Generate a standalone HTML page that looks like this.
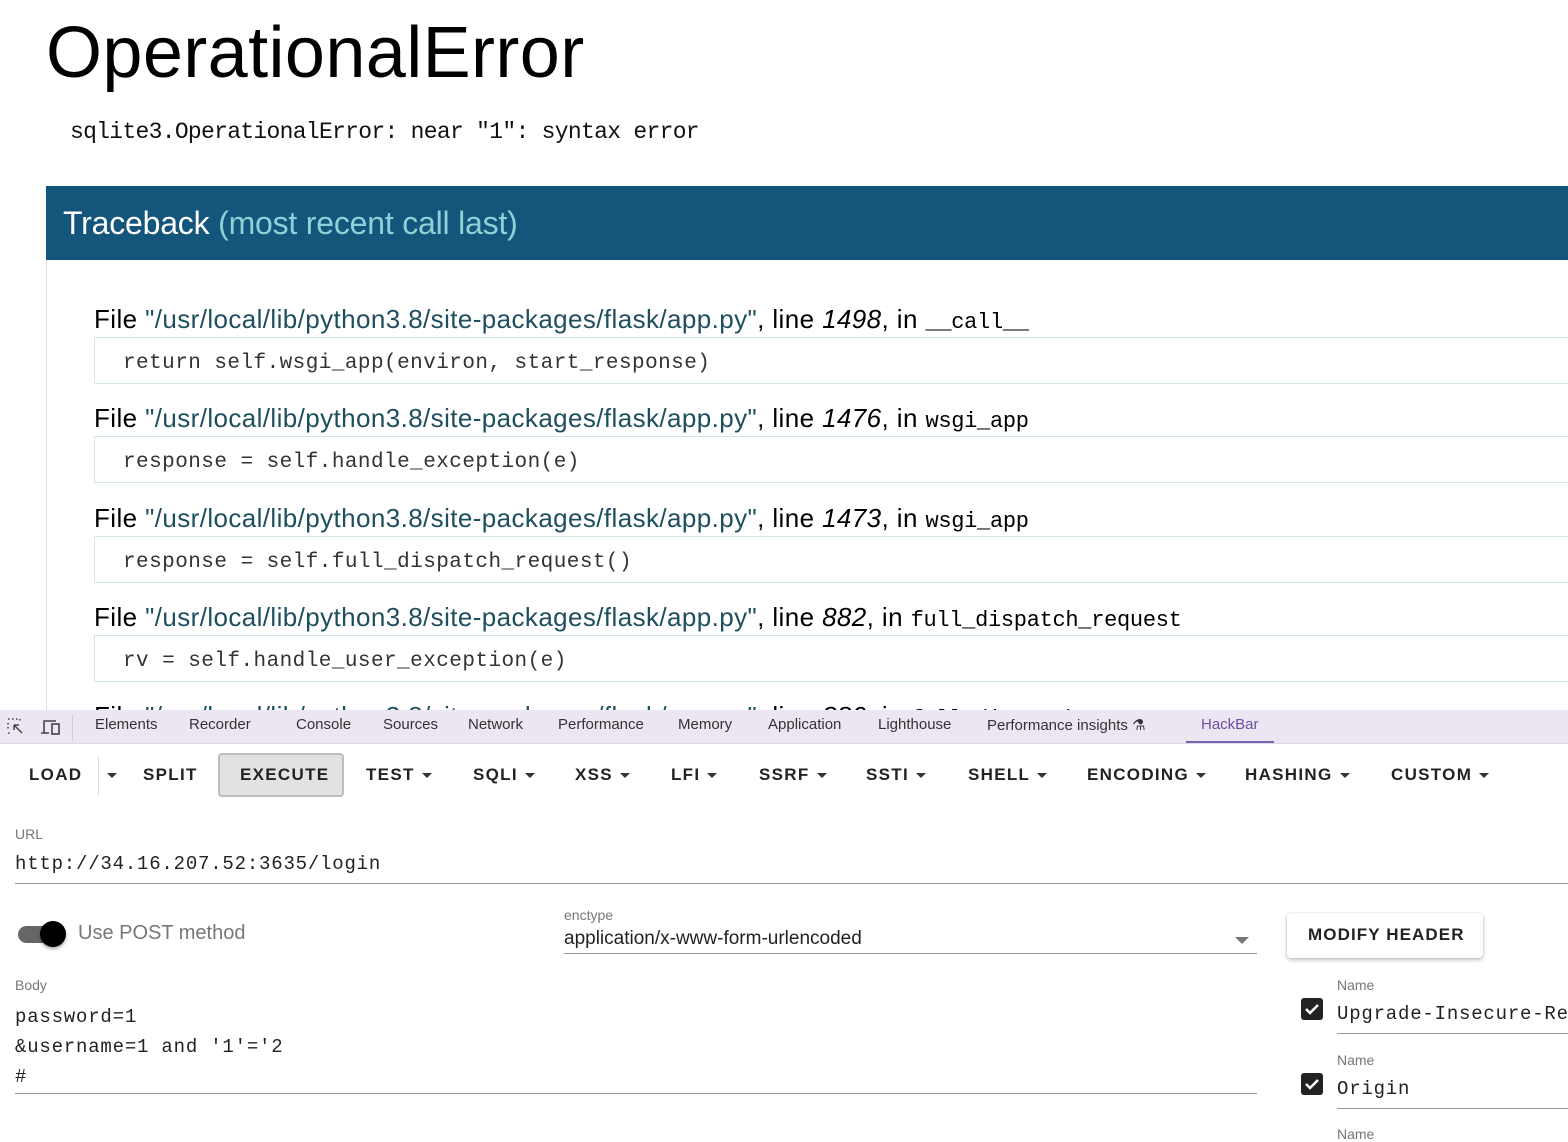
<!DOCTYPE html>
<html><head><meta charset="utf-8"><style>
*{margin:0;padding:0;box-sizing:border-box}
body{width:1568px;height:1141px;overflow:hidden;background:#fff;position:relative;font-family:"Liberation Sans",sans-serif;color:#000}
.a{position:absolute;white-space:nowrap}
.ser{font-family:"Liberation Mono","Noto Serif CJK SC",monospace}
.file{font-size:26px;letter-spacing:0.4px;left:94px}
.file .p{color:#1e4f5e}
.file i{font-style:italic}
.file .f{font-family:"Liberation Mono",monospace;font-size:22px;letter-spacing:-0.3px}
.code{left:94px;right:-2px;height:47px;border:1px solid #d3e5e9;border-right:none}
.code span{position:absolute;left:28px;top:14px;font-family:"Liberation Mono",monospace;font-size:21px;letter-spacing:0.45px;color:#333}
.tab{position:absolute;top:716px;font-size:15px;color:#333}
.btn{position:absolute;top:765px;font-size:17px;font-weight:bold;letter-spacing:1.3px;color:#222}
.car{display:inline-block;width:0;height:0;border-left:5px solid transparent;border-right:5px solid transparent;border-top:5px solid #333;vertical-align:middle;margin-left:7px}
.lbl{position:absolute;font-size:14px;color:#777}
.m{font-family:"Liberation Mono",monospace;font-size:19px;letter-spacing:0.8px;color:#222}
.cb{position:absolute;width:22px;height:22px;background:#222;border-radius:3px}
</style></head><body>
<div class="a" style="left:46px;top:12px;font-size:72px;letter-spacing:0.4px">OperationalError</div>
<div class="a ser" style="left:70px;top:119px;font-size:23px;letter-spacing:-0.7px;color:#111">sqlite3.OperationalError: near "1": syntax error</div>

<div class="a" style="left:46px;top:186px;width:1530px;height:74px;background:#13557b"></div>
<div class="a" style="left:63px;top:205px;font-size:32px;color:#fff;letter-spacing:-0.2px">Traceback <span style="color:#8fd0d6">(most recent call last)</span></div>
<div class="a" style="left:46px;top:260px;width:1px;height:460px;background:#ddd"></div>

<div class="a file" style="top:304px">File <span class="p">"/usr/local/lib/python3.8/site-packages/flask/app.py"</span>, line <i>1498</i>, in <span class="f">__call__</span></div>
<div class="a code" style="top:337px"><span>return self.wsgi_app(environ, start_response)</span></div>
<div class="a file" style="top:403px">File <span class="p">"/usr/local/lib/python3.8/site-packages/flask/app.py"</span>, line <i>1476</i>, in <span class="f">wsgi_app</span></div>
<div class="a code" style="top:436px"><span>response = self.handle_exception(e)</span></div>
<div class="a file" style="top:503px">File <span class="p">"/usr/local/lib/python3.8/site-packages/flask/app.py"</span>, line <i>1473</i>, in <span class="f">wsgi_app</span></div>
<div class="a code" style="top:536px"><span>response = self.full_dispatch_request()</span></div>
<div class="a file" style="top:602px">File <span class="p">"/usr/local/lib/python3.8/site-packages/flask/app.py"</span>, line <i>882</i>, in <span class="f">full_dispatch_request</span></div>
<div class="a code" style="top:635px"><span>rv = self.handle_user_exception(e)</span></div>
<div class="a file" style="top:701px">File <span class="p">"/usr/local/lib/python3.8/site-packages/flask/app.py"</span>, line <i>880</i>, in <span class="f">full_dispatch_request</span></div>

<div class="a" style="left:0;top:710px;width:1568px;height:34px;background:#ece6f2;border-bottom:1px solid #ddd5e8"></div>
<svg class="a" style="left:6px;top:717px" width="20" height="20" viewBox="0 0 20 20" fill="none" stroke="#444" stroke-width="1.5"><path d="M2 2h2M6 2h2M10 2h2M2 6v2M2 10v2M2 16h2M14 2v2" stroke-dasharray="1.5 1.5"/><path d="M8 8l8 8M8 8h5M8 8v5"/></svg>
<svg class="a" style="left:40px;top:717px" width="22" height="20" viewBox="0 0 22 20" fill="none" stroke="#444" stroke-width="1.6"><path d="M4 16V4h12M1 16h8"/><rect x="12" y="7" width="7" height="10"/></svg>
<div class="a" style="left:72px;top:714px;width:1px;height:26px;background:#d0c8dc"></div>
<div class="tab" style="left:95px">Elements</div>
<div class="tab" style="left:189px">Recorder</div>
<div class="tab" style="left:296px">Console</div>
<div class="tab" style="left:383px">Sources</div>
<div class="tab" style="left:468px">Network</div>
<div class="tab" style="left:558px">Performance</div>
<div class="tab" style="left:678px">Memory</div>
<div class="tab" style="left:768px">Application</div>
<div class="tab" style="left:878px">Lighthouse</div>
<div class="tab" style="left:987px">Performance insights ⚗</div>
<div class="tab" style="left:1201px;color:#6a4fa0">HackBar</div>
<div class="a" style="left:1186px;top:741px;width:88px;height:2px;background:#7b63b3"></div>

<div class="btn" style="left:29px">LOAD</div>
<div class="a" style="left:98px;top:756px;width:1px;height:40px;background:#ddd"></div>
<div class="btn" style="left:100px"><span class="car"></span></div>
<div class="btn" style="left:143px">SPLIT</div>
<div class="a" style="left:218px;top:753px;width:126px;height:44px;background:#e2e2e2;border:2px solid #bdbdbd;border-radius:4px"></div>
<div class="btn" style="left:240px">EXECUTE</div>
<div class="btn" style="left:366px">TEST<span class="car"></span></div>
<div class="btn" style="left:473px">SQLI<span class="car"></span></div>
<div class="btn" style="left:575px">XSS<span class="car"></span></div>
<div class="btn" style="left:671px">LFI<span class="car"></span></div>
<div class="btn" style="left:759px">SSRF<span class="car"></span></div>
<div class="btn" style="left:866px">SSTI<span class="car"></span></div>
<div class="btn" style="left:968px">SHELL<span class="car"></span></div>
<div class="btn" style="left:1087px">ENCODING<span class="car"></span></div>
<div class="btn" style="left:1245px">HASHING<span class="car"></span></div>
<div class="btn" style="left:1391px">CUSTOM<span class="car"></span></div>

<div class="lbl" style="left:15px;top:826px">URL</div>
<div class="a m" style="left:15px;top:853px">http://34.16.207.52:3635/login</div>
<div class="a" style="left:15px;top:883px;width:1560px;height:1px;background:#999"></div>

<div class="a" style="left:18px;top:926px;width:44px;height:17px;border-radius:9px;background:#666"></div>
<div class="a" style="left:40px;top:921px;width:26px;height:26px;border-radius:50%;background:#000;box-shadow:0 2px 3px rgba(0,0,0,.35)"></div>
<div class="a" style="left:78px;top:922px;font-size:20px;color:#777">Use POST method</div>

<div class="lbl" style="left:564px;top:907px">enctype</div>
<div class="a" style="left:564px;top:928px;font-size:19px;color:#222">application/x-www-form-urlencoded</div>
<div class="a" style="left:1235px;top:937px;border-left:7px solid transparent;border-right:7px solid transparent;border-top:7px solid #777"></div>
<div class="a" style="left:564px;top:953px;width:693px;height:1px;background:#999"></div>

<div class="a" style="left:1287px;top:913px;width:196px;height:45px;background:#fff;border-radius:4px;box-shadow:0 2px 4px rgba(0,0,0,.25),0 0 1px rgba(0,0,0,.2)"></div>
<div class="a" style="left:1308px;top:925px;font-size:17px;font-weight:bold;letter-spacing:1.1px;color:#222">MODIFY HEADER</div>

<div class="lbl" style="left:15px;top:977px">Body</div>
<div class="a m" style="left:15px;top:1002px;line-height:30px">password=1<br>&amp;username=1 and '1'='2<br>#</div>
<div class="a" style="left:15px;top:1093px;width:1242px;height:1px;background:#999"></div>

<div class="lbl" style="left:1337px;top:977px">Name</div>
<div class="cb" style="left:1301px;top:998px"></div>
<svg class="a" style="left:1301px;top:998px" width="22" height="22"><path d="M5 11l4 4 8-8" stroke="#fff" stroke-width="2.5" fill="none"/></svg>
<div class="a m" style="left:1337px;top:1003px">Upgrade-Insecure-Requests</div>
<div class="a" style="left:1337px;top:1033px;width:240px;height:1px;background:#999"></div>
<div class="lbl" style="left:1337px;top:1052px">Name</div>
<div class="cb" style="left:1301px;top:1073px"></div>
<svg class="a" style="left:1301px;top:1073px" width="22" height="22"><path d="M5 11l4 4 8-8" stroke="#fff" stroke-width="2.5" fill="none"/></svg>
<div class="a m" style="left:1337px;top:1078px">Origin</div>
<div class="a" style="left:1337px;top:1108px;width:240px;height:1px;background:#999"></div>
<div class="lbl" style="left:1337px;top:1126px">Name</div>
</body></html>
